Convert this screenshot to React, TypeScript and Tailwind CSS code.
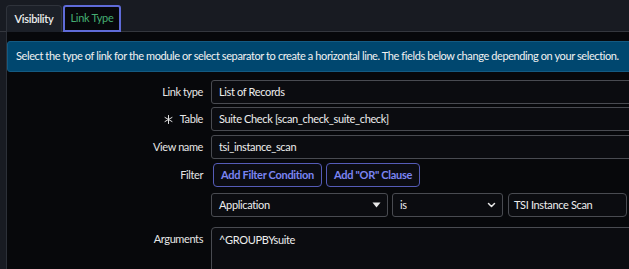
import React from "react";

const font = { fontFamily: "Lato, 'Open Sans', sans-serif" };

function Asterisk() {
  return (
    <svg width="9" height="9" viewBox="0 0 10 10" className="inline-block shrink-0">
      <g stroke="#e5e5e5" strokeWidth="1.1" strokeLinecap="round">
        <line x1="5" y1="0.5" x2="5" y2="9.5" />
        <line x1="1.1" y1="2.75" x2="8.9" y2="7.25" />
        <line x1="1.1" y1="7.25" x2="8.9" y2="2.75" />
      </g>
    </svg>
  );
}

function Row({ label, children, top, asterisk }: { label: string; children: React.ReactNode; top: string; asterisk?: boolean }) {
  return (
    <div className={`flex items-center ${top}`}>
      <div className="w-[196px] shrink-0 flex justify-end items-center gap-[7px] text-[11px] tracking-[-0.4px] text-[#e6e6e6]">
        {asterisk && <Asterisk />}
        <span>{label}</span>
      </div>
      <div className="ml-2 flex-1 flex min-w-0">{children}</div>
    </div>
  );
}

function Input({ value }: { value: string }) {
  return (
    <div className="h-6 flex-1 flex items-center rounded-[3px] border border-[#494b51] bg-[#0b0c10] pl-[7px] text-[11px] tracking-[-0.35px] text-[#eeeeee] whitespace-nowrap">
      {value}
    </div>
  );
}

export default function App() {
  return (
    <div className="w-[629px] h-[269px] overflow-hidden bg-[#07080b]" style={font}>
      <div className="w-[720px]">
        <div className="h-[32px] bg-[#181b22] border-b border-[#34373e] flex items-end pl-[6px]">
          <div className="h-[27px] w-[56px] shrink-0 flex items-center justify-center rounded-t-[4px] border border-b-0 border-[#2f333b] bg-[#1c2028] text-[11px] tracking-[-0.3px] font-semibold text-[#ededed] -mb-px">
            Visibility
          </div>
          <div className="ml-px h-[27px] w-[58px] shrink-0 flex items-center justify-center rounded-t-[3px] border-2 border-[#5f6bd8] bg-[#07080b] text-[11px] tracking-[-0.3px] text-[#45ad72] -mb-px">
            Link Type
          </div>
        </div>
        <div className="flex">
          <div className="w-[7px] shrink-0 bg-[#181b22] border-r border-[#2c3038] self-stretch" />
          <div className="flex-1 min-w-0 pb-10">
            <div className="mt-[9px] h-[31px] flex items-center rounded-[3px] border border-[#145a82] bg-[#00476f] pl-[8px] text-[11px] tracking-[-0.4px] text-[#f2f2f2] whitespace-nowrap">
              Select the type of link for the module or select separator to create a horizontal line. The fields below change depending on your selection.
            </div>
            <Row label="Link type" top="mt-[8px]">
              <Input value="List of Records" />
            </Row>
            <Row label="Table" top="mt-[3px]" asterisk>
              <Input value="Suite Check [scan_check_suite_check]" />
            </Row>
            <Row label="View name" top="mt-[4px]">
              <Input value="tsi_instance_scan" />
            </Row>
            <Row label="Filter" top="mt-[4px]">
              <div className="flex gap-[4px] pl-[2px]">
                <div className="h-6 px-[7px] flex items-center rounded-[4px] border border-[#555cb8] bg-[#0b0c12] text-[11px] tracking-[-0.3px] font-bold text-[#7b85f2] whitespace-nowrap">
                  Add Filter Condition
                </div>
                <div className="h-6 px-[7px] flex items-center rounded-[4px] border border-[#555cb8] bg-[#0b0c12] text-[11px] tracking-[-0.3px] font-bold text-[#7b85f2] whitespace-nowrap">
                  Add "OR" Clause
                </div>
              </div>
            </Row>
            <div className="flex mt-[6px]">
              <div className="w-[204px] shrink-0" />
              <div className="flex gap-[4px] shrink-0">
                <div className="h-6 w-[177px] flex items-center justify-between rounded-[3px] border border-[#494b51] bg-[#0b0c10] pl-[7px] pr-[6px] text-[11px] tracking-[-0.35px] text-[#eeeeee]">
                  <span>Application</span>
                  <svg width="9" height="6" viewBox="0 0 9 6"><path d="M0.5 0.5 L8.5 0.5 L4.5 5.5 Z" fill="#e8e8e8" /></svg>
                </div>
                <div className="h-6 w-[111px] flex items-center justify-between rounded-[3px] border border-[#494b51] bg-[#0b0c10] pl-[7px] pr-[6px] text-[11px] tracking-[-0.35px] text-[#eeeeee]">
                  <span>is</span>
                  <svg width="9" height="6" viewBox="0 0 9 6"><path d="M1.5 1.5 L4.5 4.5 L7.5 1.5" fill="none" stroke="#e8e8e8" strokeWidth="1.5" strokeLinecap="round" strokeLinejoin="round" /></svg>
                </div>
                <div className="ml-px h-6 w-[119px] flex items-center rounded-[4px] border border-[#494b51] bg-[#0b0c10] pl-[5px] text-[11px] tracking-[-0.35px] text-[#eeeeee] whitespace-nowrap">
                  TSI Instance Scan
                </div>
              </div>
            </div>
            <div className="flex mt-[10px]">
              <div className="w-[196px] shrink-0 text-right text-[11px] tracking-[-0.4px] text-[#e6e6e6] pt-[4px]">Arguments</div>
              <div className="ml-2 flex-1 h-[70px] rounded-[4px] border border-[#494b51] bg-[#0b0c10] pl-[7px] pt-[4px] text-[11px] tracking-[-0.35px] text-[#eeeeee]">
                ^GROUPBYsuite
              </div>
            </div>
          </div>
        </div>
      </div>
    </div>
  );
}
